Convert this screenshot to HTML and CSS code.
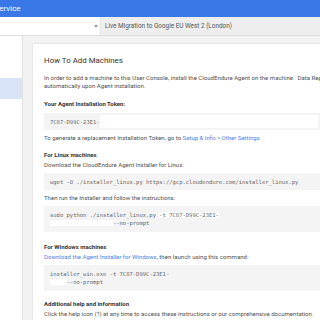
FILE: index.html
```html
<!DOCTYPE html>
<html>
<head>
<meta charset="utf-8">
<link rel="stylesheet" href="styles.css">
</head>
<body>
<header class="topbar"><span class="brand">CloudEndure Live Migration Service</span></header>
<div class="subbar">
  <div class="select"><span class="arrow"></span></div>
  <div class="project">Live Migration to Google EU West 2 (London)</div>
</div>
<div class="layout">
  <aside class="sidebar">
    <div class="nav-item"></div>
    <div class="nav-item active"></div>
  </aside>
  <main class="main">
    <section class="card">
      <h1 class="title">How To Add Machines</h1>
      <p class="text intro">In order to add a machine to this User Console, install the CloudEndure Agent on the machine.&nbsp; Data Replication will begin<br>automatically upon Agent installation.</p>
      <h2 class="label first">Your Agent Installation Token:</h2>
      <div class="code token"><span>7C87-D99C-23E1-</span><span class="mask fill"></span></div>
      <p class="text after">To generate a replacement Installation Token, go to <a class="link">Setup &amp; Info &gt; Other Settings</a></p>
      <h2 class="label">For Linux machines</h2>
      <p class="text sub">Download the CloudEndure Agent Installer for Linux:</p>
      <div class="code">wget -O ./installer_linux.py https://gcp.cloudendure.com/installer_linux.py</div>
      <p class="text after">Then run the Installer and follow the instructions:</p>
      <div class="code multi">sudo python ./installer_linux.py <span class="mask">-t 7C87-D99C-23E1-</span><br><span class="mask">                   </span>--no-prompt</div>
      <h2 class="label wide">For Windows machines</h2>
      <p class="text sub"><a class="link">Download the Agent Installer for Windows</a>, then launch using this command:</p>
      <div class="code multi">installer_win.exe -t 7C87-D99C-23E1-<br><span class="mask">     </span>--no-prompt</div>
      <h2 class="label">Additional help and information</h2>
      <p class="text sub">Click the help icon (?) at any time to access these instructions or our comprehensive documentation.</p>
    </section>
  </main>
</div>
</body>
</html>
```

FILE: styles.css
```css
html, body {
  margin: 0;
  padding: 0;
  width: 320px;
  height: 320px;
  overflow: hidden;
  background: #f2f2f2;
  font-family: Roboto, "Liberation Sans", sans-serif;
}

.topbar {
  height: 17px;
  background: #3b78e7;
  display: flex;
  align-items: center;
  overflow: hidden;
}

.brand {
  color: #fff;
  font-size: 8px;
  white-space: nowrap;
  margin-left: -105px;
}

.subbar {
  height: 18px;
  display: flex;
  background: #fff;
  border-bottom: 1px solid #e0e0e0;
}

.select {
  width: 100px;
  position: relative;
  background: #fff;
  border-right: 1px solid #e4e4e4;
}

.arrow {
  position: absolute;
  right: 2px;
  top: 8px;
  width: 0;
  height: 0;
  border-left: 2.5px solid transparent;
  border-right: 2.5px solid transparent;
  border-top: 3px solid #999;
}

.project {
  flex: 1;
  background: #eeeeee;
  color: #555;
  font-size: 6.4px;
  display: flex;
  align-items: center;
  padding-left: 4px;
  white-space: nowrap;
}

.layout {
  display: flex;
  height: 290px;
}

.sidebar {
  width: 22px;
  flex: none;
  background: #fff;
  border-right: 1px solid #e2e2e2;
  padding-top: 21px;
}

.nav-item {
  height: 21px;
}

.nav-item.active {
  background: #d9e4f8;
}

.main {
  flex: 1;
  padding: 8px 0 0 10px;
  overflow: hidden;
}

.card {
  width: 340px;
  background: #fff;
  box-shadow: 0 0 2px rgba(0,0,0,0.12);
  padding: 12px 11px 20px 11px;
  box-sizing: border-box;
}

.title {
  margin: 0;
  font-size: 7.9px;
  line-height: 10px;
  font-weight: 400;
  color: #333;
}

.text {
  margin: 0;
  font-size: 6.05px;
  line-height: 8px;
  color: #505050;
  white-space: nowrap;
}

.intro { margin-top: 8px; }
.after { margin-top: 4px; }
.sub { margin-top: 2px; }

.label {
  margin: 9px 0 0;
  font-size: 6px;
  line-height: 8px;
  font-weight: 700;
  color: #333;
}

.label.first { margin-top: 10px; }
.label.wide { margin-top: 11px; }

.link { color: #4a82e8; }

.code {
  margin-top: 4px;
  background: #f4f4f4;
  font-family: "DejaVu Sans Mono", "Liberation Mono", monospace;
  font-size: 5.5px;
  line-height: 8px;
  color: #666;
  padding: 4.5px 6px;
  white-space: pre;
  width: 276px;
  box-sizing: border-box;
}

.code.multi {
  padding: 5px 6px;
}

.token {
  display: flex;
  align-items: center;
  padding: 2px 2px 2px 6px;
  height: 17px;
  margin-top: 5px;
}

.mask {
  background: #fff;
}

.fill {
  flex: 1;
  height: 13px;
}
```
